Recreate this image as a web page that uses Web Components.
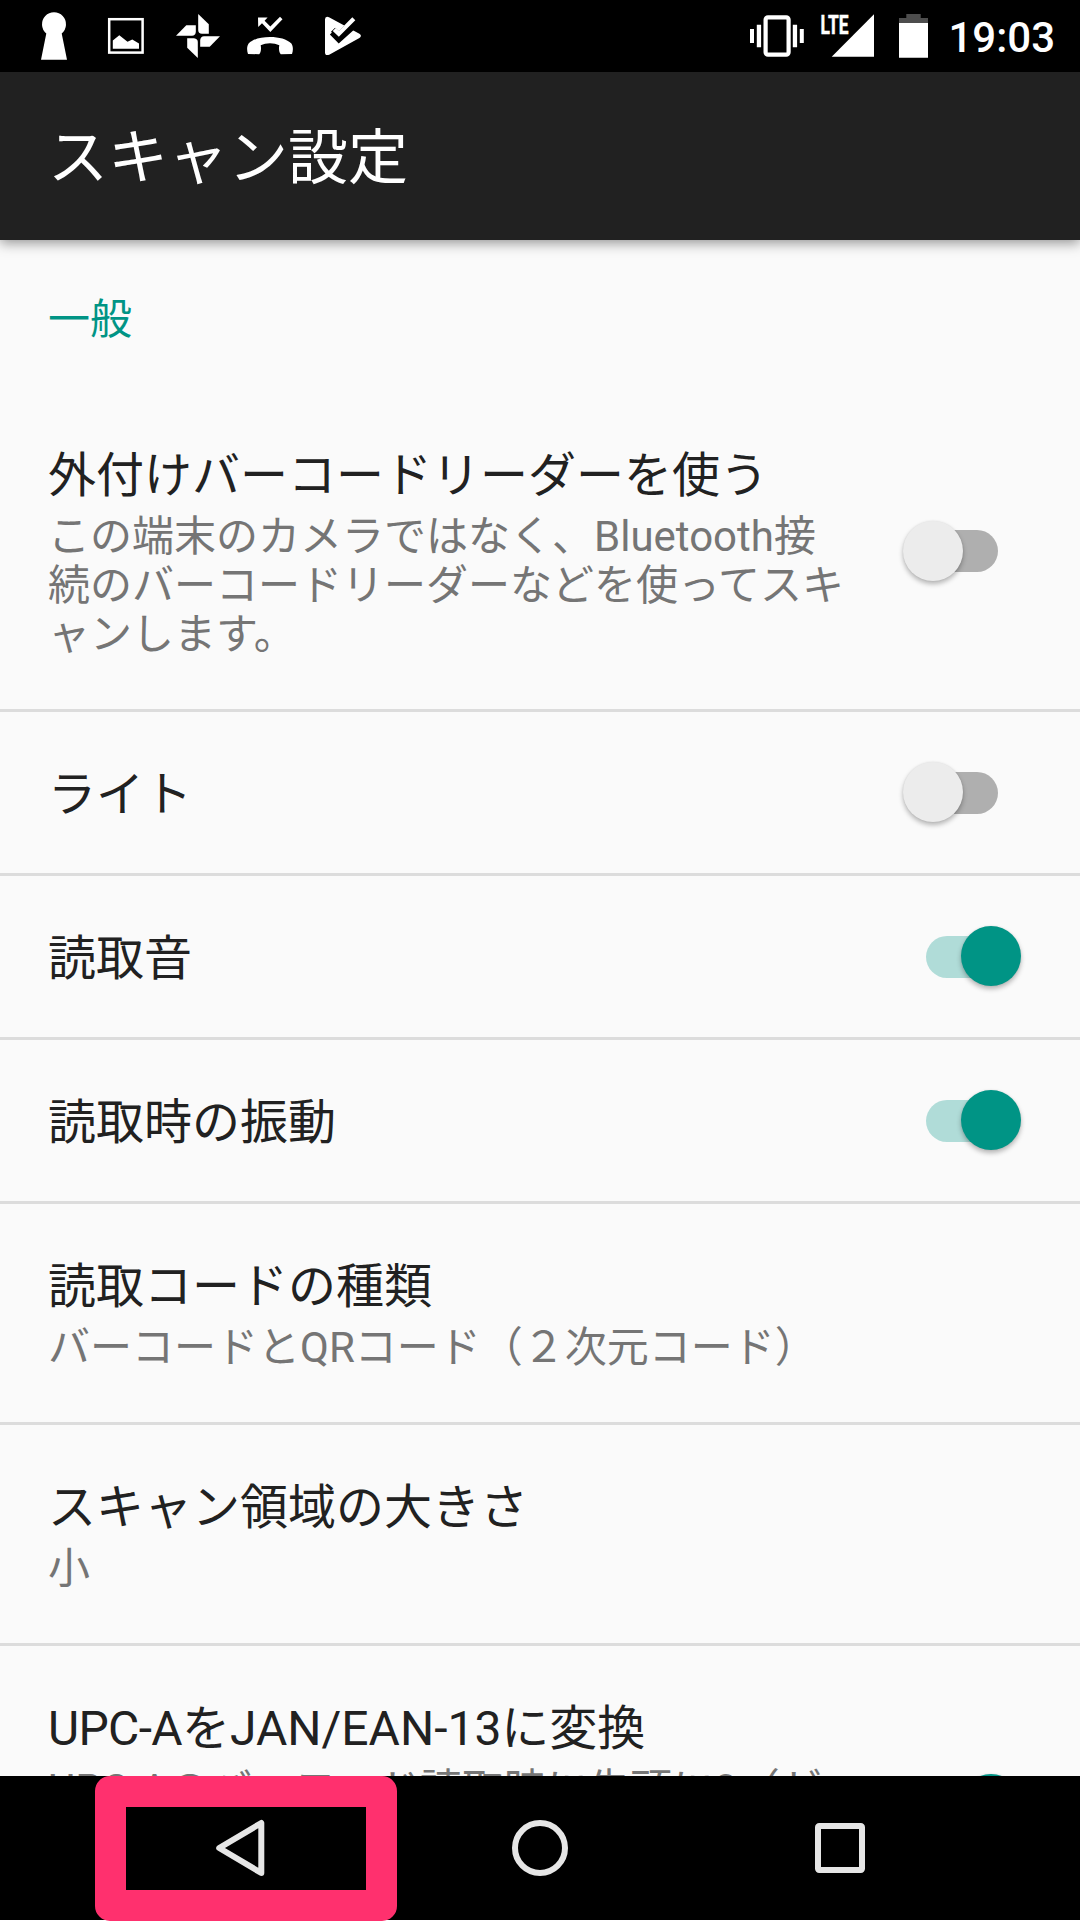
<!DOCTYPE html>
<html lang="ja">
<head>
<meta charset="utf-8">
<title>スキャン設定</title>
<style>
  html, body { margin: 0; padding: 0; background: #fff; }
  body { width: 1080px; height: 1921px; overflow: hidden; font-family: Roboto, "Noto Sans CJK JP", sans-serif; }
</style>
</head>
<body>
<scan-settings-screen></scan-settings-screen>
<script>
const define = (name, html, setup) => customElements.define(name, class extends HTMLElement {
  constructor() {
    super();
    this.attachShadow({ mode: 'open' });
  }
  connectedCallback() {
    const t = document.createElement('template');
    t.innerHTML = html;
    this.shadowRoot.replaceChildren(t.content.cloneNode(true));
    if (setup) setup(this, this.shadowRoot);
  }
});

const ICONS = {
  keyhole: ['18 0 72 72', '<path fill="#fff" d="M46.3 33.5A12 12 0 1 1 61.7 33.5L67 59.7H41z"/>'],
  image: ['90 0 72 72', '<rect x="109.2" y="19.2" width="33.4" height="33.4" fill="none" stroke="#fff" stroke-width="2.5"/><path fill="#fff" d="M112.8 40.5L119.3 35.2L127.5 41.8L132.3 39.4L139 43.5V48.7H112.8z"/>'],
  pinwheel: ['162 0 72 72', [0, 90, 180, 270].map(a => `<path transform="rotate(${a} 198 36)" fill="#fff" d="M198.2 14L208.8 24.3V33.8H202Q198.2 33.4 198.2 30z"/>`).join('')],
  missed: ['234 0 72 72', '<path fill="#fff" d="M258 17.5H267.6L264.6 20.7L270.3 26.5L280 16.8L282.5 19.3L270.3 32L262 23.3L258.2 27z"/><path fill="#fff" d="M248 54C246.6 50 246.9 46 248.6 43.5C253 39.1 261 37 270 37C279 37 287 39.1 291.4 43.5C293.1 46 293.4 50 292 54L280.8 54.2C279.3 52.5 278.5 49.5 279.3 45.3C274 42.4 266 42.4 260.7 45.3C261.5 49.5 260.7 52.5 259.2 54.2z"/>'],
  playcheck: ['306 0 72 72', '<path fill="#fff" d="M325 19.5Q325 15.8 329 17.2L344.3 25.4L338.8 31.3L335.1 27.7L331 31.8L339 40.8L351.5 29.4L359.4 33.8Q362.4 35.8 359.4 38.1L329.2 54.7Q325 56.2 325 52.2z"/><path d="M331.3 33.2L338.8 40.7L353.5 27.5" fill="none" stroke="#000" stroke-width="4"/><path d="M334.2 29.4L338.8 33.9L353.8 18.7" fill="none" stroke="#fff" stroke-width="4.2"/>'],
  vibrate: ['741 0 72 72', '<rect x="765.6" y="17.4" width="23" height="37.2" rx="2.4" fill="none" stroke="#fff" stroke-width="4.2"/><path fill="#fff" d="M750 29h4v14h-4zM756.8 24.7h4.3v22.6h-4.3zM792.8 24.7h4.3v22.6h-4.3zM799.8 29h4v14h-4z"/>'],
  signal: ['813 0 72 72', '<text x="820.5" y="33.7" font-size="25.6" font-weight="700" fill="#fff" stroke="#fff" stroke-width=".5" textLength="28" lengthAdjust="spacingAndGlyphs">LTE</text><path fill="#fff" d="M831.7 56.7L874 14.2V56.7z"/>'],
  battery: ['885 0 56 72', '<path fill="#4d4d4d" d="M906.3 14h14.4v4h7.3v5.2h-29V18h7.3z"/><path fill="#fff" d="M899 23h29v34.8h-29z"/>'],
  back: ['204 1812 72 72', '<path d="M219.2 1848L261.3 1823V1873z" fill="none" stroke="#e6e6e6" stroke-width="6" stroke-linejoin="round"/>'],
  home: ['504 1812 72 72', '<circle cx="540" cy="1848" r="25" fill="none" stroke="#e6e6e6" stroke-width="6"/>'],
  recents: ['804 1812 72 72', '<rect x="818" y="1826" width="44" height="44" rx="1.2" fill="none" stroke="#e6e6e6" stroke-width="6"/>']
};

define('ui-icon', '<style>:host{display:block;flex:none}svg{display:block}text{font-family:Roboto,sans-serif}</style><div></div>', (el, root) => {
  const [box, art] = ICONS[el.getAttribute('name')];
  const [, , w, h] = box.split(' ');
  root.querySelector('div').innerHTML = `<svg width="${w}" height="${h}" viewBox="${box}">${art}</svg>`;
});

define('status-bar', `<style>
  :host{display:flex;height:72px;background:#000;box-sizing:border-box;padding:0 25px 0 18px;color:#fff}
  .right{display:flex;margin-left:auto}
  .time{width:114px;text-align:right;font:500 42px/75px Roboto,sans-serif}
</style>
<ui-icon name="keyhole"></ui-icon><ui-icon name="image"></ui-icon><ui-icon name="pinwheel"></ui-icon><ui-icon name="missed"></ui-icon><ui-icon name="playcheck"></ui-icon>
<div class="right"><ui-icon name="vibrate"></ui-icon><ui-icon name="signal"></ui-icon><ui-icon name="battery"></ui-icon><div class="time"><slot></slot></div></div>`);

define('app-bar', `<style>
  :host{display:flex;align-items:center;height:168px;padding:5px 48px 0;background:#212121;color:#fff;font-size:60px;line-height:80px;position:relative;z-index:1;box-shadow:0 3px 12px rgba(0,0,0,.42);box-sizing:border-box}
</style><slot></slot>`);

define('section-header', `<style>
  :host{display:flex;flex:none;align-items:center;height:153px;padding:5px 48px 0;box-sizing:border-box;color:#009485;font-size:42px;line-height:57px}
</style><slot></slot>`);

define('toggle-switch', `<style>
  :host{display:flex;align-items:center;width:120px;height:62px;flex:none;box-sizing:border-box;padding-left:24px}
  .track{display:flex;align-items:center;width:72px;height:42px;border-radius:21px;background:#afafaf}
  .thumb{flex:none;width:60px;height:60px;border-radius:50%;margin:-1px 0 0 -23.5px;background:#ececec;box-shadow:0 3px 5px rgba(0,0,0,.28),0 0 2px rgba(0,0,0,.08)}
  :host([on]) .track{background:#b0dcd8}
  :host([on]) .thumb{background:#009485;margin-left:35px}
</style><div class="track"><div class="thumb"></div></div>`);

define('setting-row', `<style>
  :host{display:flex;align-items:center;box-sizing:border-box;padding:48px 58px 48px 48px;border-bottom:3px solid #dcdcdc;flex:none}
  .text{flex:1;white-space:nowrap}
  .title{height:65px;font-size:48px;line-height:69px;color:#212121}
  .summary{font-size:42px;line-height:49px;color:#757575}
  .summary ::slotted(*){display:block;padding:6px 0 2px}
</style><div class="text"><div class="title"><slot name="title"></slot></div><div class="summary"><slot></slot></div></div><slot name="control"></slot>`);

define('nav-bar', `<style>
  :host{display:flex;height:144px;background:#000;position:relative;padding:0 90px;box-sizing:border-box;flex:none;z-index:2}
  .cell{width:300px;display:flex;align-items:center;justify-content:center}
  .highlight{position:absolute;left:95px;top:0;width:302px;height:145px;box-sizing:border-box;border:solid #ff306e;border-width:31px;border-radius:15px}
</style>
<div class="cell"><ui-icon name="back"></ui-icon></div><div class="cell"><ui-icon name="home"></ui-icon></div><div class="cell"><ui-icon name="recents"></ui-icon></div>
<div class="highlight"></div>`);

define('scan-settings-screen', `<style>
  :host{display:flex;flex-direction:column;width:1080px;height:1920px;background:#fafafa}
  main{flex:1;min-height:0;overflow:hidden;display:flex;flex-direction:column}
  toggle-switch{margin:-6px 0}
  .tight{letter-spacing:-.65px}
</style>
<status-bar>19:03</status-bar>
<app-bar>スキャン設定</app-bar>
<main>
  <section-header>一般</section-header>
  <setting-row><span slot="title">外付けバーコードリーダーを使う</span><span>この端末のカメラではなく、Bluetooth接<br>続のバーコードリーダーなどを使ってスキ<br>ャンします。</span><toggle-switch slot="control"></toggle-switch></setting-row>
  <setting-row><span slot="title">ライト</span><toggle-switch slot="control"></toggle-switch></setting-row>
  <setting-row><span slot="title">読取音</span><toggle-switch slot="control" on></toggle-switch></setting-row>
  <setting-row><span slot="title">読取時の振動</span><toggle-switch slot="control" on></toggle-switch></setting-row>
  <setting-row><span slot="title">読取コードの種類</span><span>バーコードとQRコード（２次元コード）</span></setting-row>
  <setting-row><span slot="title">スキャン領域の大きさ</span><span>小</span></setting-row>
  <setting-row><span slot="title"><span class="tight">UPC-A</span>をJAN/EAN-13に変換</span><span>UPC-Aのバーコード読取時に先頭に0（ゼ<br>&nbsp;<br>&nbsp;</span><toggle-switch slot="control" on></toggle-switch></setting-row>
</main>
<nav-bar></nav-bar>`);
</script>
</body>
</html>
